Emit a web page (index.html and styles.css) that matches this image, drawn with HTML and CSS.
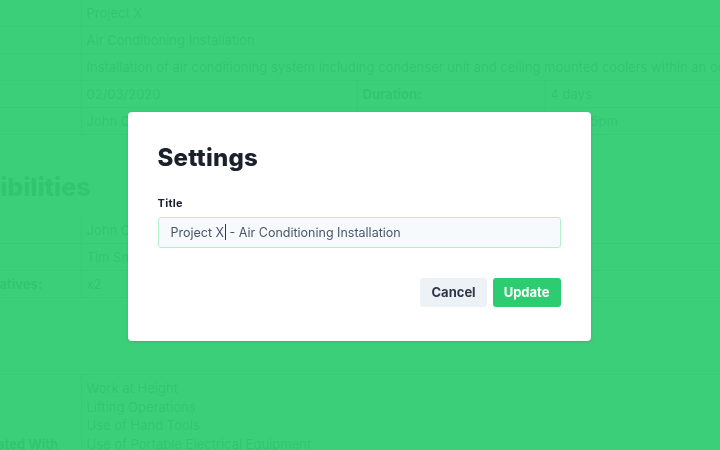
FILE: index.html
```html
<!DOCTYPE html>
<html lang="en">
<head>
    <meta charset="utf-8" />
    <meta name="viewport" content="width=device-width, initial-scale=1" />
    <title>Project X - Settings</title>
    <link rel="stylesheet" href="styles.css">
</head>
<body>

  <!-- pagina de fondo -->
  <div class="page">
    <table class="details">
      <colgroup><col class="c-lbl"><col class="c-val"><col class="c-lbl2"><col></colgroup>
      <tr><td class="lbl">Ref:</td><td colspan="3">Project X</td></tr>
      <tr><td class="lbl">Title:</td><td colspan="3">Air Conditioning Installation</td></tr>
      <tr><td class="lbl">Scope:</td><td colspan="3">Installation of air conditioning system including condenser unit and ceiling mounted coolers within an occupied office building</td></tr>
      <tr><td class="lbl">Start:</td><td class="val">02/03/2020</td><td class="lbl">Duration:</td><td>4 days</td></tr>
      <tr><td class="lbl">By:</td><td class="val">John Carter</td><td class="lbl">Working Hours:</td><td>8am - 5pm</td></tr>
    </table>

    <h2 class="section">Responsibilities</h2>
    <table class="details">
      <colgroup><col class="c-lbl"><col class="c-val"><col class="c-lbl2"><col></colgroup>
      <tr><td class="lbl">Site Supervisor:</td><td class="val">John Carter</td><td></td><td></td></tr>
      <tr><td class="lbl">First Aider:</td><td class="val">Tim Smith</td><td></td><td></td></tr>
      <tr><td class="lbl">Number of Operatives:</td><td class="val">x2</td><td></td><td></td></tr>
    </table>

    <table class="details hazards">
      <colgroup><col class="c-lbl"><col></colgroup>
      <tr>
        <td class="lbl">Hazards Associated With</td>
        <td>
          <ul class="list">
            <li>Work at Height</li>
            <li>Lifting Operations</li>
            <li>Use of Hand Tools</li>
            <li>Use of Portable Electrical Equipment</li>
            <li>Hot Works</li>
            <li>Working in Occupied Areas</li>
            <li>Manual Handling</li>
          </ul>
        </td>
      </tr>
    </table>
  </div>

  <!-- Modal -->
  <div class="overlay">
    <div class="modal">
      <h1>Settings</h1>
      <label class="field-label">Title</label>
      <div class="input">Project X<span class="caret"></span> - Air Conditioning Installation</div>
      <div class="actions">
        <button class="btn btn-cancel">Cancel</button>
        <button class="btn btn-update">Update</button>
      </div>
    </div>
  </div>

</body>
</html>
```

FILE: styles.css
```css
body {
    margin: 0;
    font-family: "Inter", "Open Sans", sans-serif;
    color: #2d3748;
    overflow: hidden;
    height: 450px;
}
.page {
    margin-left: -107px;
    width: 900px;
    font-size: 13px;
}
.details {
    border-collapse: collapse;
    width: 100%;
    table-layout: fixed;
}
.c-lbl { width: 188px; }
.c-val { width: 276px; }
.c-lbl2 { width: 188px; }
.details td {
    height: 26px;
    padding: 0 5px;
    border-bottom: 1px solid #a0aec0;
    white-space: nowrap;
    overflow: hidden;
}
.details td.lbl { font-weight: 700; border-right: 1px solid #a0aec0; }
.details td.val { border-right: 1px solid #a0aec0; }
.section {
    font-size: 25px;
    font-weight: 800;
    margin: 38px 0 16px 0;
    height: 28px;
    line-height: 28px;
}
.hazards { margin-top: 76px; border-top: 1px solid #a0aec0; }
.hazards td { padding: 4px 5px; vertical-align: top; }
.hazards td.lbl { vertical-align: middle; }
.list { list-style: none; margin: 0; padding: 0; }
.list li { line-height: 18.5px; }

/* --- overlay y modal --- */
.overlay {
    position: fixed;
    top: 0; left: 0; right: 0; bottom: 0;
    background-color: rgba(49, 204, 115, 0.95);
    display: flex;
    justify-content: center;
    align-items: center;
}
.modal {
    background-color: #fff;
    width: 403px;
    padding: 30px 30px 34px 30px;
    border-radius: 4px;
    box-shadow: 0 1px 3px rgba(0, 0, 0, 0.12);
    transform: translate(-1px, 1px);
}
.modal h1 {
    margin: 0 0 22px 0;
    font-size: 24px;
    font-weight: 800;
    color: #1a202c;
    line-height: 32px;
    letter-spacing: 0.2px;
}
.field-label {
    display: block;
    font-size: 11px;
    font-weight: 700;
    color: #1a202c;
    margin-bottom: 7px;
    letter-spacing: 0.3px;
}
.input {
    box-sizing: border-box;
    height: 31px;
    line-height: 29px;
    padding: 0 12px;
    border: 1px solid #b5f0cb;
    border-radius: 3px;
    background-color: #f7fafc;
    font-size: 12.5px;
    color: #4a5568;
    white-space: nowrap;
}
.caret {
    display: inline-block;
    width: 1px;
    height: 16px;
    background: #2d3748;
    vertical-align: -3px;
    margin-left: 1px;
}
.actions {
    display: flex;
    justify-content: flex-end;
    gap: 6px;
    margin-top: 30px;
}
.btn {
    font-family: inherit;
    font-size: 13px;
    font-weight: 700;
    border: none;
    border-radius: 3px;
    height: 29px;
    padding: 0 11px;
    cursor: pointer;
}
.btn-cancel { background-color: #edf2f7; color: #2d3748; }
.btn-update { background-color: #2ecc71; color: #fff; }
```
